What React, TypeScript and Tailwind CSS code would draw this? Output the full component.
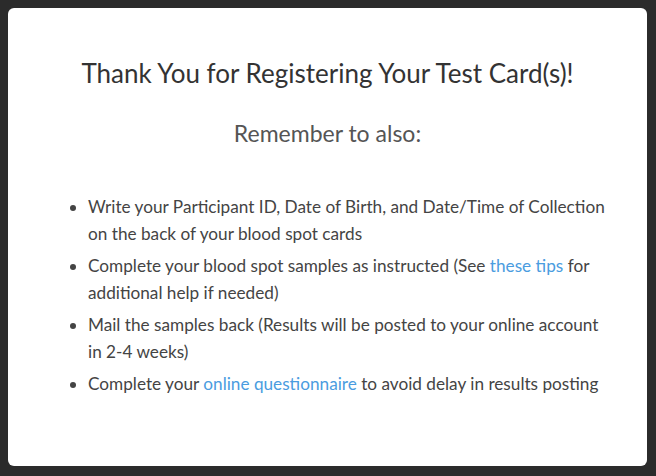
import React from 'react';

const items: React.ReactNode[] = [
  <>Write your Participant ID, Date of Birth, and Date/Time of Collection on the back of your blood spot cards</>,
  <>
    Complete your blood spot samples as instructed (See{' '}
    <a href="#" className="text-[#4a9ce0]">these tips</a> for additional help if needed)
  </>,
  <>Mail the samples back (Results will be posted to your online account in 2-4 weeks)</>,
  <>
    Complete your <a href="#" className="text-[#4a9ce0]">online questionnaire</a> to avoid delay in results posting
  </>,
];

export default function App() {
  return (
    <div className="flex h-[476px] w-[656px] bg-[#2b2b2b] pb-[10px] pl-[8px] pr-[9px] pt-[8px] font-['Lato','Open_Sans',sans-serif]">
      <div className="flex flex-1 flex-col rounded-[6px] bg-white pt-[48px]">
        <h2 className="text-center text-[26px] leading-[34px] text-[#333]">
          Thank You for Registering Your Test Card(s)!
        </h2>
        <p className="mt-[28px] text-center text-[23px] leading-[30px] text-[#555]">Remember to also:</p>
        <ul className="ml-[61px] mr-[36px] mt-[45px] list-disc pl-[19px] text-[17.2px] leading-[27px] text-[#444] marker:text-[#444]">
          {items.map((item, i) => (
            <li key={i} className="mb-[5px]">
              {item}
            </li>
          ))}
        </ul>
      </div>
    </div>
  );
}
